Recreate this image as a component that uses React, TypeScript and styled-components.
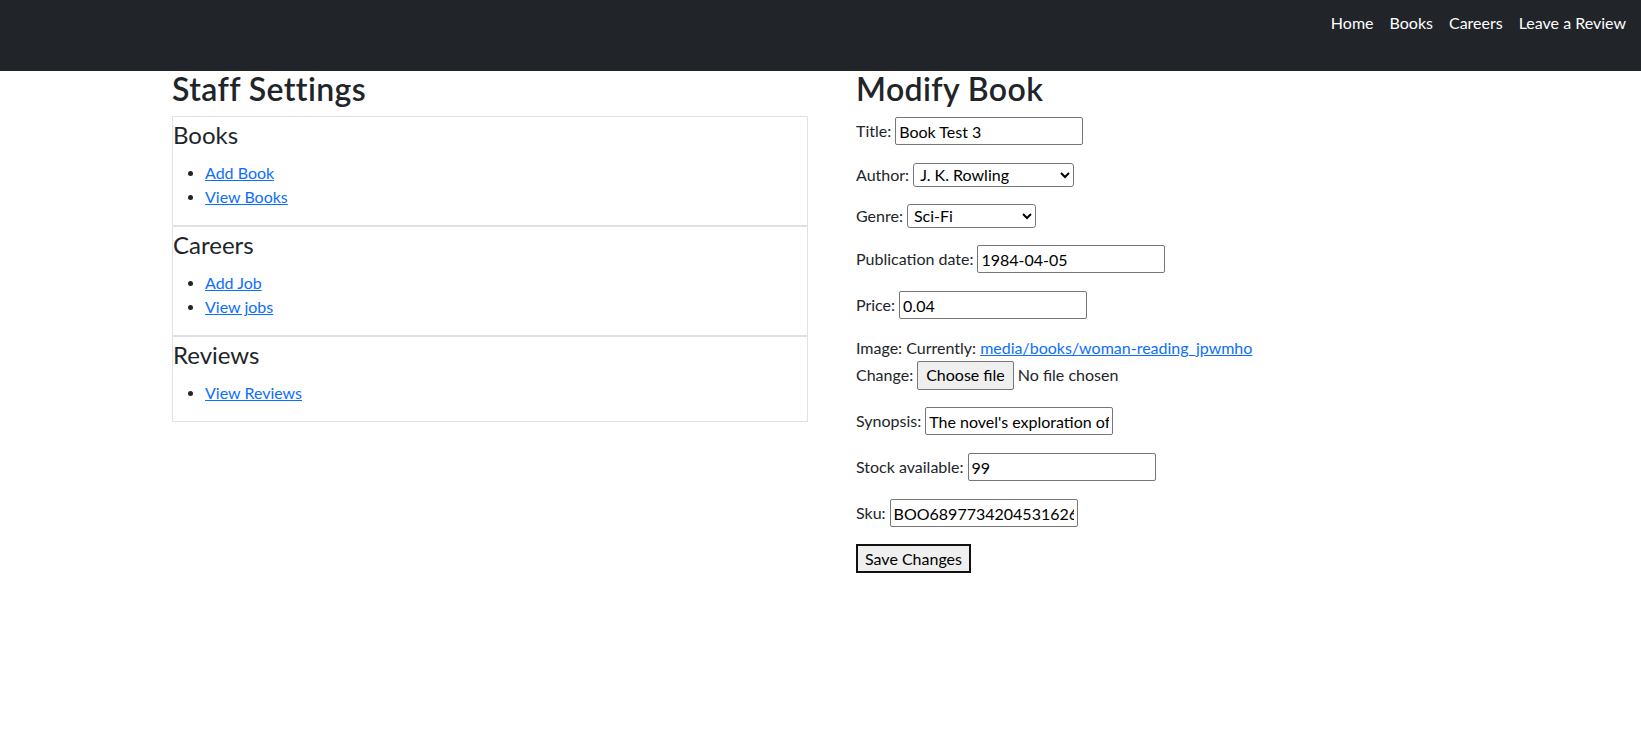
import React from "react";
import styled, { createGlobalStyle } from "styled-components";

const GlobalStyle = createGlobalStyle`
  *, *::before, *::after { box-sizing: border-box; }
  body {
    margin: 0;
    font-family: "Lato", "Liberation Sans", sans-serif;
    font-size: 16px;
    line-height: 1.5;
    color: #212529;
    background: #fff;
  }
`;

const NavBar = styled.nav`
  height: 71px;
  background: #212529;
  display: flex;
  justify-content: flex-end;
  align-items: flex-start;
  padding: 11px 15px 0 0;
`;

const NavList = styled.ul`
  display: flex;
  gap: 16px;
  list-style: none;
  margin: 0;
  padding: 0;
`;

const NavLink = styled.a`
  color: #fff;
  text-decoration: none;
  font-size: 16px;
  line-height: 24px;
`;

const Container = styled.main`
  width: 1321px;
  margin: 0 auto;
  padding: 0 12px;
  display: grid;
  grid-template-columns: 636px 1fr;
  column-gap: 48px;
`;

const Column = styled.section`
  display: flex;
  flex-direction: column;
`;

const PageTitle = styled.h2`
  margin: 0 0 9px;
  font-size: 32px;
  font-weight: 600;
  line-height: 36px;
  letter-spacing: 0.4px;
`;

const Panel = styled.div`
  border: 1px solid #dee2e6;
`;

const PanelTitle = styled.h4`
  margin: 0 0 8px;
  font-size: 24px;
  font-weight: 400;
  line-height: 36px;
`;

const LinkList = styled.ul`
  margin: 0 0 16px;
  padding-left: 32px;
`;

const Item = styled.li`
  line-height: 24px;
  &::marker {
    font-family: "Liberation Sans", sans-serif;
    font-size: 17px;
  }
`;

const TextLink = styled.a`
  color: #0d6efd;
  text-decoration: underline;
`;

const Form = styled.form`
  display: flex;
  flex-direction: column;
`;

const Field = styled.div<{ $h: number }>`
  display: flex;
  align-items: center;
  gap: 4px;
  height: ${(p) => p.$h}px;
  margin-bottom: 16px;
`;

const Label = styled.label`
  line-height: 24px;
  white-space: nowrap;
`;

const TextInput = styled.input`
  width: 188px;
  height: 28px;
  padding: 0 3px;
  border: 1px solid #767676;
  border-radius: 2px;
  font: 16px "Lato", "Liberation Sans", sans-serif;
  color: #000;
  background: #fff;
`;

const Select = styled.select<{ $w: number }>`
  width: ${(p) => p.$w}px;
  height: 24px;
  padding: 0 0 0 2px;
  border: 1px solid #767676;
  border-radius: 3px;
  font: 16px "Lato", "Liberation Sans", sans-serif;
  color: #000;
  background-color: #fff;
`;

const ImageBlock = styled.div`
  display: flex;
  flex-direction: column;
  margin-bottom: 16px;
`;

const Line = styled.div`
  line-height: 24px;
  white-space: nowrap;
`;

const ChangeRow = styled.div`
  display: flex;
  align-items: center;
  gap: 4px;
  height: 30px;
`;

const HiddenFile = styled.input`
  position: absolute;
  width: 1px;
  height: 1px;
  opacity: 0;
  overflow: hidden;
`;

const FileButton = styled.label`
  display: inline-flex;
  align-items: center;
  height: 29px;
  padding: 0 8px;
  border: 1px solid #767676;
  border-radius: 2px;
  background: #efefef;
  color: #000;
  cursor: pointer;
  white-space: nowrap;
`;

const FileStatus = styled.span`
  white-space: nowrap;
  color: #212529;
`;

const SaveButton = styled.button`
  align-self: flex-start;
  height: 29px;
  padding: 0 7px;
  border: 2px solid #111;
  border-radius: 0;
  background: #efefef;
  font: 16px "Lato", "Liberation Sans", sans-serif;
  color: #000;
`;

const sections = [
  { title: "Books", links: ["Add Book", "View Books"] },
  { title: "Careers", links: ["Add Job", "View jobs"] },
  { title: "Reviews", links: ["View Reviews"] },
];

export default function App() {
  return (
    <>
      <GlobalStyle />
      <NavBar>
        <NavList>
          {["Home", "Books", "Careers", "Leave a Review"].map((t) => (
            <li key={t}>
              <NavLink href="#">{t}</NavLink>
            </li>
          ))}
        </NavList>
      </NavBar>
      <Container>
        <Column>
          <PageTitle>Staff Settings</PageTitle>
          {sections.map((s) => (
            <Panel key={s.title}>
              <PanelTitle>{s.title}</PanelTitle>
              <LinkList>
                {s.links.map((l) => (
                  <Item key={l}>
                    <TextLink href="#">{l}</TextLink>
                  </Item>
                ))}
              </LinkList>
            </Panel>
          ))}
        </Column>
        <Column>
          <PageTitle>Modify Book</PageTitle>
          <Form onSubmit={(e) => e.preventDefault()}>
            <Field $h={30}>
              <Label htmlFor="title">Title:</Label>
              <TextInput id="title" type="text" defaultValue="Book Test 3" />
            </Field>
            <Field $h={25}>
              <Label htmlFor="author">Author:</Label>
              <Select id="author" $w={161} defaultValue="1">
                <option value="1">J. K. Rowling</option>
                <option value="2">George Orwell</option>
              </Select>
            </Field>
            <Field $h={25}>
              <Label htmlFor="genre">Genre:</Label>
              <Select id="genre" $w={129} defaultValue="scifi">
                <option value="scifi">Sci-Fi</option>
                <option value="fantasy">Fantasy</option>
              </Select>
            </Field>
            <Field $h={30}>
              <Label htmlFor="pub">Publication date:</Label>
              <TextInput id="pub" type="text" defaultValue="1984-04-05" />
            </Field>
            <Field $h={30}>
              <Label htmlFor="price">Price:</Label>
              <TextInput id="price" type="text" defaultValue="0.04" />
            </Field>
            <ImageBlock>
              <Line>
                Image: Currently: <TextLink href="#">media/books/woman-reading_jpwmho</TextLink>
              </Line>
              <ChangeRow>
                <Label htmlFor="image">Change:</Label>
                <FileButton htmlFor="image">Choose file</FileButton>
                <FileStatus>No file chosen</FileStatus>
                <HiddenFile id="image" type="file" />
              </ChangeRow>
            </ImageBlock>
            <Field $h={30}>
              <Label htmlFor="synopsis">Synopsis:</Label>
              <TextInput
                id="synopsis"
                type="text"
                defaultValue="The novel's exploration of themes such as totalitarianism and surveillance"
              />
            </Field>
            <Field $h={30}>
              <Label htmlFor="stock">Stock available:</Label>
              <TextInput id="stock" type="text" defaultValue="99" />
            </Field>
            <Field $h={30}>
              <Label htmlFor="sku">Sku:</Label>
              <TextInput id="sku" type="text" defaultValue="BOO689773420453162674" />
            </Field>
            <SaveButton type="submit">Save Changes</SaveButton>
          </Form>
        </Column>
      </Container>
    </>
  );
}
